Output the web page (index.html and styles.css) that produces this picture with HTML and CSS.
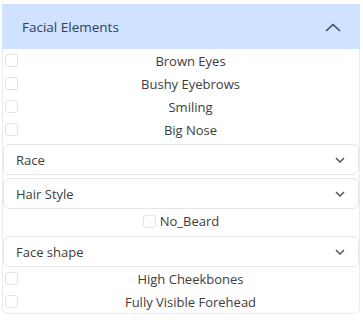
FILE: index.html
```html
<!DOCTYPE html>
<html lang="en">
<head>
    <meta charset="UTF-8">
    <meta name="viewport" content="width=device-width, initial-scale=1.0">
    <title>Facial Elements</title>
    <link rel="stylesheet" href="styles.css">
</head>
<body>
    <div class="accordion">
        <div class="accordion-header">
            <span>Facial Elements</span>
            <svg class="chevron-up" width="16" height="9" viewBox="0 0 16 9">
                <path d="M1 8 L8 1.5 L15 8" fill="none" stroke="#3b4a5e" stroke-width="1.6"/>
            </svg>
        </div>
        <div class="accordion-body">
            <label class="check-row"><span class="box"></span><span class="label">Brown Eyes</span></label>
            <label class="check-row"><span class="box"></span><span class="label">Bushy Eyebrows</span></label>
            <label class="check-row"><span class="box"></span><span class="label">Smiling</span></label>
            <label class="check-row"><span class="box"></span><span class="label">Big Nose</span></label>

            <div class="select">
                <span>Race</span>
                <svg width="10" height="6" viewBox="0 0 10 6"><path d="M1 1 L5 5 L9 1" fill="none" stroke="#555" stroke-width="1.5"/></svg>
            </div>
            <div class="select">
                <span>Hair Style</span>
                <svg width="10" height="6" viewBox="0 0 10 6"><path d="M1 1 L5 5 L9 1" fill="none" stroke="#555" stroke-width="1.5"/></svg>
            </div>

            <label class="check-center"><span class="box"></span><span>No_Beard</span></label>

            <div class="select">
                <span>Face shape</span>
                <svg width="10" height="6" viewBox="0 0 10 6"><path d="M1 1 L5 5 L9 1" fill="none" stroke="#555" stroke-width="1.5"/></svg>
            </div>

            <label class="check-row"><span class="box"></span><span class="label">High Cheekbones</span></label>
            <label class="check-row"><span class="box"></span><span class="label">Fully Visible Forehead</span></label>
        </div>
    </div>
</body>
</html>
```

FILE: styles.css
```css
body {
    font-family: "Open Sans", "Noto Sans", sans-serif;
    font-size: 13px;
    color: #3d3d3d;
    margin: 0;
    padding: 4px 3px 0 2px;
    background-color: #fff;
}
.accordion {
    border: 1px solid #ececec;
    border-top: none;
    border-radius: 0 0 6px 6px;
}
.accordion-header {
    background-color: #cfe2ff;
    color: #2f3f55;
    height: 45px;
    margin: 0 -1px;
    padding: 0 19px 0 20px;
    display: flex;
    justify-content: space-between;
    align-items: center;
    font-size: 13.5px;
}
.chevron-up {
    margin-top: 2px;
}
.check-row {
    height: 23px;
    display: flex;
    align-items: center;
    padding-left: 2px;
}
.check-row .label {
    flex: 1;
    text-align: center;
    padding-right: 2px;
}
.box {
    width: 13px;
    height: 13px;
    border: 1px solid #e2e2e2;
    border-radius: 3px;
    box-sizing: border-box;
    display: inline-block;
}
.check-row .box {
    margin-right: 6px;
}
.check-center {
    height: 24px;
    display: flex;
    justify-content: center;
    align-items: center;
    gap: 4px;
}
.select {
    height: 31px;
    box-sizing: border-box;
    margin-top: 3px;
    border: 1px solid #e6e6e6;
    border-radius: 6px;
    display: flex;
    justify-content: space-between;
    align-items: center;
    padding: 0 13px 0 12px;
}
```
